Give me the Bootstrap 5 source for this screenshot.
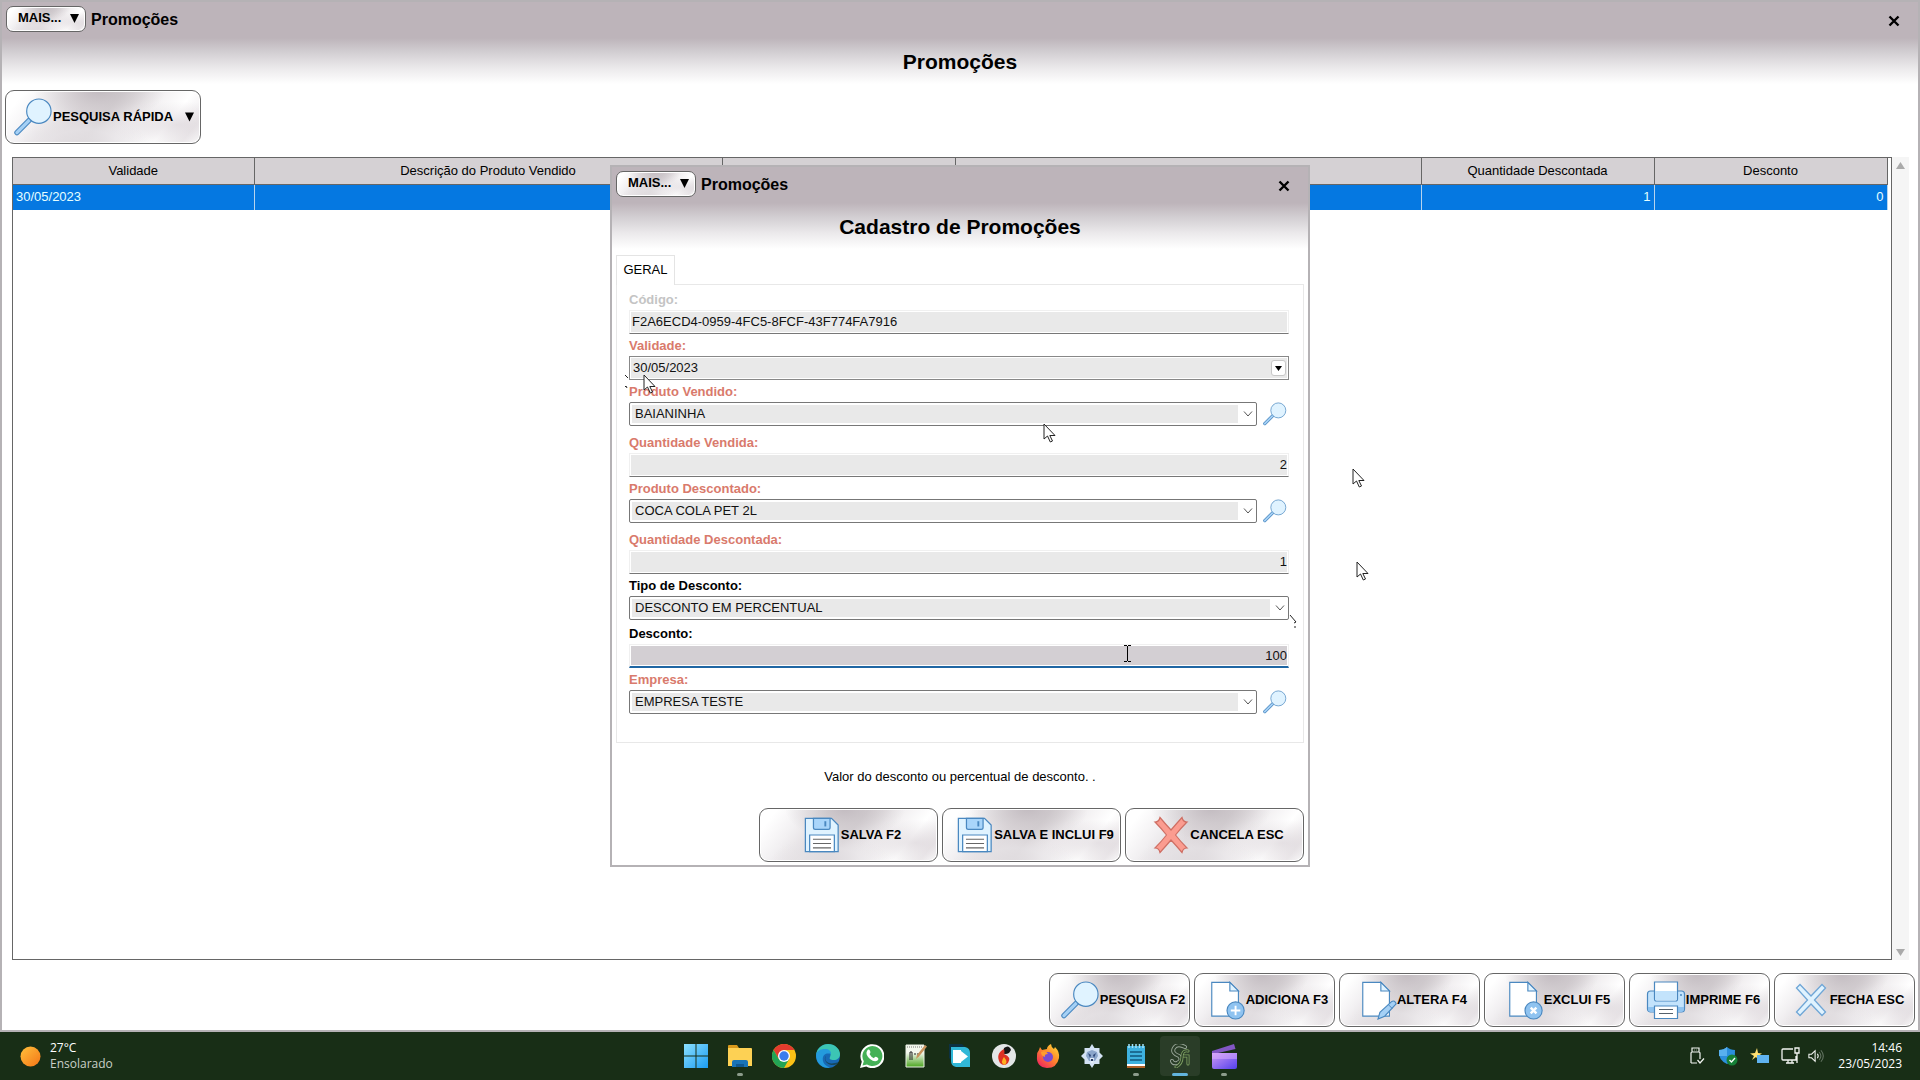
<!DOCTYPE html>
<html lang="pt-BR">
<head>
<meta charset="utf-8">
<meta name="viewport" content="width=device-width, initial-scale=1">
<title>Promoções</title>
<link href="https://cdn.jsdelivr.net/npm/bootstrap@5.3.0/dist/css/bootstrap.min.css" rel="stylesheet">
<style>
  body { font-family: "Liberation Sans", Arial, sans-serif; font-size: 13px; line-height: 16px; color: #000; background: #fff; }
  .frame-win { border: 2px solid #b5b2b5; background: linear-gradient(#bdb4ba 0, #bdb4ba 36px, #d2ced2 50px, #ebe9eb 66px, #fff 82px) #fff; }
  .desk { min-height: 0; }
  .title-bar { height: 36px; padding: 4px 4px 0; gap: 5px; }
  .title-name { font-size: 16px; font-weight: 700; line-height: 28px; }
  .win-heading { font-size: 21px; font-weight: 700; line-height: 48px; text-align: center; margin: 0; }
  .shut { border: 0; background: none; padding: 0; width: 26px; height: 28px; margin-right: 7px; }
  .metal { font-size: 13px; font-weight: 700; color: #000; border: 1px solid #666; border-radius: 9px; padding: 0; white-space: nowrap;
    box-shadow: inset 0 0 0 1px #fff;
    background:
      radial-gradient(ellipse 34% 60% at 48% 0%, #c3bcc1 0%, rgba(200,194,198,.6) 45%, rgba(255,255,255,0) 100%),
      radial-gradient(ellipse 34% 50% at 40% 100%, #e0dcdf 0%, rgba(232,229,232,.6) 50%, rgba(255,255,255,0) 100%),
      radial-gradient(ellipse 35% 45% at 88% 65%, rgba(215,208,213,.6) 0%, rgba(255,255,255,0) 100%),
      linear-gradient(128deg, #fff 8%, #f2f0f2 22%, #dfdadd 38%, #d8d3d6 50%, #eeebed 62%, #fff 80%, #efecee 92%, #fff 100%); }
  .metal:hover { color: #000; }
  .metal svg { flex: none; }
  .more { width: 80px; height: 26px; border-radius: 7px; padding: 0 6px 2px 11px; }
  .quick { width: 196px; height: 54px; padding: 0 6px 0 8px; }
  .act { width: 141px; height: 54px; padding-left: 7px; }
  .act-wide { width: 179px; }
  .quick-row { padding: 4px 3px 13px; }
  .sheet-row { padding: 0 11px 0 10px; }
  .sheet { border: 1px solid #666; padding-right: 3px; }
  .sheet-table { width: 100%; table-layout: fixed; border-collapse: collapse; }
  .sheet-table th, .sheet-table td { padding: 0 3px; height: 26px; border-right: 1px solid #666; }
  .sheet-table th { background: #d5d1d4; font-weight: 400; text-align: center; border-bottom: 1px solid #666; }
  .sheet-table td { background: #0578e1; color: #e6ffff; border-right-color: #b7d4ee; }
  .c-date { width: 241px; } .c-desc { width: 468px; } .c-qty { width: 233px; } .c-prod { width: 466px; }
  .rail { width: 17px; flex: none; background: #f5f5f5; padding: 5px 0 4px; }
  .acts { padding: 13px 3px 3px; gap: 4px; }

  .dlg { position: absolute; left: 50%; top: 50%; transform: translate(-50%, -50%); width: 700px; z-index: 5; }
  .dlg-body { padding: 4px 4px 0; }
  .tab-on { border: 1px solid #e4e4e4; border-bottom: 0; background: #fff; width: 59px; height: 30px; margin-bottom: -1px; position: relative; padding: 0 0 2px; color: #000; }
  .panel-box { border: 1px solid #e8e8e8; padding: 3px 14px 28px 12px; }
  .f-label { display: block; height: 22px; line-height: 24px; font-weight: 700; color: #d97a6c; }
  .f-off { color: #c4c4c4; } .f-opt { color: #000; }
  .f-line, .f-combo { display: block; width: 100%; height: 24px; font-size: 13px; line-height: 16px; color: #111; border-radius: 0; }
  .f-line { border: 1px solid #f0f0f0; border-bottom-color: #777; padding: 1px 2px 3px; background: #e9e9e9; box-shadow: inset 1px 1px 0 #fff, inset -1px -1px 0 #fff; }
  .f-line.text-end { padding-right: 1px; }
  .f-live { background: #d3cfd3; border-bottom: 2px solid #1f66a3; padding-bottom: 2px; }
  .f-date { border: 1px solid #888; padding-left: 3px; }
  .f-combo { appearance: none; border: 1px solid #777; border-radius: 2px; padding: 0 20px 1px 5px; background: linear-gradient(#e9e9e9, #e9e9e9) 2px 2px / calc(100% - 20px) calc(100% - 4px) no-repeat #fff; }
  .f-line:focus, .f-combo:focus { outline: 0; }
  .pick { position: relative; flex: 1; }
  .pick .chev { position: absolute; right: 4px; top: 9px; pointer-events: none; }
  .pick .day { position: absolute; right: 3px; top: 4px; width: 15px; height: 16px; border: 1px solid #c8c8c8; border-radius: 3px; background: #fff; padding: 0; line-height: 0; }
  .lens { border: 0; background: none; padding: 0; width: 26px; height: 24px; line-height: 0; text-align: left; }
  .f-find { gap: 6px; margin-bottom: 5px; }
  .f-gap { margin-bottom: 2px; }
  .hint { line-height: 62px; padding-top: 3px; text-align: center; margin: 0; }
  .dlg-acts { gap: 4px; padding-bottom: 3px; }

  .pointer { position: absolute; z-index: 9; pointer-events: none; }
  .p1 { left: 643px; top: 374px; } .p2 { left: 1043px; top: 423px; } .p3 { left: 1352px; top: 468px; } .p4 { left: 1356px; top: 561px; }
  .p5 { left: 1123px; top: 645px; } .p6 { left: 624px; top: 374px; } .p7 { left: 1289px; top: 614px; }

  .task-bar { display: grid; grid-template-columns: 1fr auto 1fr; height: 48px; background: #182e16; color: #fff; font-family: "Open Sans", "Noto Sans", sans-serif; font-size: 12px; flex: none; }
  .task-btn { width: 44px; height: 48px; border: 0; background: none; padding: 0; position: relative; }
  .task-btn::after { content: ""; position: absolute; bottom: 4px; left: 19px; width: 6px; height: 3px; border-radius: 2px; background: transparent; }
  .task-open::after { background: #8c9c8b; }
  .task-now::before { content: ""; position: absolute; inset: 4px 2px; border-radius: 4px; background: #2a3d28; }
  .task-now::after { left: 14px; width: 16px; background: #62b5dd; }
  .task-btn svg { position: relative; }
  .weather { padding-left: 20px; gap: 9px; }
  .soft { color: #c9d0c8; }
  .tray { padding-right: 18px; }
  .tray-icons { gap: 8px; margin-right: 14px; }
</style>
<script src="https://cdn.jsdelivr.net/npm/bootstrap@5.3.0/dist/js/bootstrap.bundle.min.js"></script>
</head>
<body class="vh-100 overflow-hidden d-flex flex-column">

<svg width="0" height="0" class="position-absolute" aria-hidden="true">
  <symbol id="lens" viewBox="0 0 40 40"><path d="M15.500 23.500 3 36" stroke="#4a88c0" stroke-width="5.500" stroke-linecap="round"/><path d="M15.500 23.500 3 36" stroke="#a5d0f5" stroke-width="3.300" stroke-linecap="round"/><circle cx="25.500" cy="14" r="12.500" fill="#e0f3ff" stroke="#4a88c0" stroke-width="1.200"/></symbol>
  <symbol id="tri" viewBox="0 0 10 10"><path d="M0 0h10L5 10z"/></symbol>
  <symbol id="cross" viewBox="0 0 12 12"><path d="m1.500 1.500 9 9m0-9-9 9" stroke="#000" stroke-width="2.400"/></symbol>
  <symbol id="down" viewBox="0 0 10 6"><path d="m1 .5 4 4.500 4-4.500" fill="none" stroke="#555"/></symbol>
  <symbol id="disk" viewBox="0 0 40 40"><path d="M2.500 2.500H30l7 7V37.500H2.500z" fill="#e0f3ff" stroke="#4a88c0" stroke-width="1.300"/><path d="M11 2.500h17.500V12q0 2-2 2H13q-2 0-2-2z" fill="#a9d5fa" stroke="#4a88c0" stroke-width="1.300"/><path d="M23.500 5.500v5.500" stroke="#4a88c0" stroke-width="2"/><path d="M7 37.500V20h26v17.500z" fill="#fff" stroke="#4a88c0" stroke-width="1.300"/><path d="M10.500 24.500h19m-19 4.500h19m-19 4.500h19" stroke="#666" stroke-width="1.200"/></symbol>
  <symbol id="sheet" viewBox="0 0 40 40"><path d="M3 2.500h19l9 9V38H3z" fill="#fff" stroke="#4a88c0" stroke-width="1.200"/><path d="M22 2.500v9h9z" fill="#e0f3ff" stroke="#4a88c0" stroke-width="1.200"/></symbol>
  <symbol id="arrow" viewBox="0 0 13 20"><path d="M1 1v15l3.500-3 2.800 6 2.200-1-2.700-5.500H12z" fill="#fff" stroke="#222" stroke-width="1"/></symbol>
</svg>

<main class="desk flex-grow-1 position-relative">
  <section class="frame-win h-100 d-flex flex-column">
    <header class="title-bar d-flex align-items-start">
      <button class="btn metal more d-flex align-items-center justify-content-between" type="button">MAIS...<svg width="9" height="9"><use href="#tri"/></svg></button>
      <span class="title-name">Promoções</span>
      <button class="shut ms-auto" type="button" aria-label="Fechar"><svg width="12" height="12"><use href="#cross"/></svg></button>
    </header>
    <h1 class="win-heading">Promoções</h1>
    <div class="quick-row">
      <button class="btn metal quick d-flex align-items-center" type="button"><svg width="39" height="40"><use href="#lens"/></svg>PESQUISA RÁPIDA<svg class="ms-auto" width="9" height="10"><use href="#tri"/></svg></button>
    </div>
    <div class="sheet-row d-flex flex-grow-1">
      <div class="sheet flex-grow-1">
        <table class="sheet-table">
          <colgroup><col class="c-date"><col class="c-desc"><col class="c-qty"><col class="c-prod"><col class="c-qty"><col class="c-qty"></colgroup>
          <thead><tr><th>Validade</th><th>Descrição do Produto Vendido</th><th></th><th></th><th>Quantidade Descontada</th><th>Desconto</th></tr></thead>
          <tbody><tr><td>30/05/2023</td><td></td><td></td><td></td><td class="text-end">1</td><td class="text-end">0</td></tr></tbody>
        </table>
      </div>
      <div class="rail d-flex flex-column justify-content-between align-items-center" aria-hidden="true">
        <svg width="9" height="7" viewBox="0 0 9 7"><path d="M4.500 0 9 7H0z" fill="#aaa"/></svg>
        <svg width="9" height="7" viewBox="0 0 9 7"><path d="M0 0h9L4.500 7z" fill="#aaa"/></svg>
      </div>
    </div>
    <footer class="acts d-flex justify-content-end">
      <button class="btn metal act d-flex align-items-center justify-content-center" type="button"><svg width="39" height="40"><use href="#lens"/></svg>PESQUISA F2</button>
      <button class="btn metal act d-flex align-items-center justify-content-center" type="button"><svg width="38" height="40" viewBox="0 0 38 42"><use href="#sheet" width="40" height="40"/><circle cx="28" cy="32" r="9" fill="#8fc3f0" stroke="#4a88c0" stroke-width="1.200"/><path d="M28 27v10m-5-5h10" stroke="#fff" stroke-width="2"/></svg>ADICIONA F3</button>
      <button class="btn metal act d-flex align-items-center justify-content-center" type="button"><svg width="38" height="40" viewBox="0 0 38 42"><use href="#sheet" width="40" height="40"/><path d="m19 41 2-7L33.500 22.500q3-1.500 4.500 2.500L26 38z" fill="#a5d0f5" stroke="#4a88c0" stroke-width="1.200"/><path d="m30 26 4 4" stroke="#4a88c0"/></svg>ALTERA F4</button>
      <button class="btn metal act d-flex align-items-center justify-content-center" type="button"><svg width="38" height="40" viewBox="0 0 38 42"><use href="#sheet" width="40" height="40"/><circle cx="28" cy="32" r="9" fill="#8fc3f0" stroke="#4a88c0" stroke-width="1.200"/><path d="m25 29 6 6m0-6-6 6" stroke="#fff" stroke-width="2.500"/></svg>EXCLUI F5</button>
      <button class="btn metal act d-flex align-items-center justify-content-center" type="button"><svg width="40" height="40" viewBox="0 0 40 40"><rect x="1.500" y="11" width="37" height="21" rx="3" fill="#c3e3fc" stroke="#4a88c0" stroke-width="1.200"/><path d="M8.500 2h23v17q0 2-2 2h-19q-2 0-2-2z" fill="#fff" stroke="#4a88c0" stroke-width="1.200"/><path d="M9 11h22v8q0 1.500-1.500 1.500h-19Q9 20.500 9 19z" fill="#c3e3fc"/><path d="M2 27h36v2q0 3-3 3H5q-3 0-3-3z" fill="#8fc3f0"/><path d="M8.500 26h23v12.500h-23z" fill="#fff" stroke="#4a88c0" stroke-width="1.200"/><path d="M13 29.500h14m-14 4h14" stroke="#55606b"/><path d="M34 15h2" stroke="#4a88c0" stroke-width="1.500"/></svg>IMPRIME F6</button>
      <button class="btn metal act d-flex align-items-center justify-content-center" type="button"><svg width="38" height="40" viewBox="0 0 38 40"><path d="m4.500 8 3.500-3.500 11 11.500 11-11.500L33.500 8 22.500 20l11 12-3.500 3.500-11-11.500L8 35.500 4.500 32l11-12z" fill="#e0f3ff" stroke="#6fa6d6" stroke-width="1.300"/></svg>FECHA ESC</button>
    </footer>
  </section>

  <section class="dlg frame-win" role="dialog" aria-labelledby="dlg-title">
    <header class="title-bar d-flex align-items-start">
      <button class="btn metal more d-flex align-items-center justify-content-between" type="button">MAIS...<svg width="9" height="9"><use href="#tri"/></svg></button>
      <span class="title-name">Promoções</span>
      <button class="shut ms-auto" type="button" aria-label="Fechar"><svg width="12" height="12"><use href="#cross"/></svg></button>
    </header>
    <h2 class="win-heading" id="dlg-title">Cadastro de Promoções</h2>
    <form class="dlg-body">
      <button class="tab-on d-block" type="button" role="tab" aria-selected="true">GERAL</button>
      <div class="panel-box">
        <label class="f-label f-off" for="cod">Código:</label>
        <input class="f-line" id="cod" type="text" value="F2A6ECD4-0959-4FC5-8FCF-43F774FA7916" readonly>
        <label class="f-label" for="val">Validade:</label>
        <div class="pick"><input class="f-line f-date" id="val" type="text" value="30/05/2023"><button class="day" type="button" aria-label="Abrir calendário"><svg width="7" height="5" viewBox="0 0 10 10" preserveAspectRatio="none"><path d="M0 0h10L5 10z"/></svg></button></div>
        <label class="f-label" for="pv">Produto Vendido:</label>
        <div class="f-find d-flex"><div class="pick"><select class="f-combo" id="pv"><option>BAIANINHA</option></select><svg class="chev" width="10" height="6"><use href="#down"/></svg></div><button class="lens" type="button" aria-label="Pesquisar produto"><svg width="24" height="24"><use href="#lens"/></svg></button></div>
        <label class="f-label" for="qv">Quantidade Vendida:</label>
        <input class="f-line text-end" id="qv" type="text" value="2">
        <label class="f-label" for="pd">Produto Descontado:</label>
        <div class="f-find d-flex"><div class="pick"><select class="f-combo" id="pd"><option>COCA COLA PET 2L</option></select><svg class="chev" width="10" height="6"><use href="#down"/></svg></div><button class="lens" type="button" aria-label="Pesquisar produto descontado"><svg width="24" height="24"><use href="#lens"/></svg></button></div>
        <label class="f-label" for="qd">Quantidade Descontada:</label>
        <input class="f-line text-end" id="qd" type="text" value="1">
        <label class="f-label f-opt" for="td">Tipo de Desconto:</label>
        <div class="pick f-gap"><select class="f-combo" id="td"><option>DESCONTO EM PERCENTUAL</option></select><svg class="chev" width="10" height="6"><use href="#down"/></svg></div>
        <label class="f-label f-opt" for="de">Desconto:</label>
        <input class="f-line f-live text-end" id="de" type="text" value="100">
        <label class="f-label" for="em">Empresa:</label>
        <div class="d-flex f-find mb-0"><div class="pick"><select class="f-combo" id="em"><option>EMPRESA TESTE</option></select><svg class="chev" width="10" height="6"><use href="#down"/></svg></div><button class="lens" type="button" aria-label="Pesquisar empresa"><svg width="24" height="24"><use href="#lens"/></svg></button></div>
      </div>
      <p class="hint">Valor do desconto ou percentual de desconto. .</p>
      <div class="dlg-acts d-flex justify-content-end">
        <button class="btn metal act act-wide d-flex align-items-center justify-content-center" type="button"><svg width="38" height="40"><use href="#disk"/></svg>SALVA F2</button>
        <button class="btn metal act act-wide d-flex align-items-center justify-content-center" type="button"><svg width="38" height="40"><use href="#disk"/></svg>SALVA E INCLUI F9</button>
        <button class="btn metal act act-wide d-flex align-items-center justify-content-center" type="button"><svg width="38" height="40" viewBox="0 0 38 40"><path d="M3 7q4 0 5-4.500 5 6 11 12.500Q25 8 30 2.500q1 4.500 5 4.500-6 6-11.500 13Q29 27 35 33q-4 0-5 4.500-5-6-11-12.500-6 7-11 12.500Q7 33 3 33q6-6 11.500-13Q9 13 3 7z" fill="#fb9c90" stroke="#cf6f64" stroke-width="1.200"/></svg>CANCELA ESC</button>
      </div>
    </form>
  </section>

  <svg class="pointer p1" width="13" height="20"><use href="#arrow"/></svg>
  <svg class="pointer p2" width="13" height="20"><use href="#arrow"/></svg>
  <svg class="pointer p3" width="13" height="20"><use href="#arrow"/></svg>
  <svg class="pointer p4" width="13" height="20"><use href="#arrow"/></svg>
  <svg class="pointer p5" width="9" height="17" viewBox="0 0 9 17"><path d="M1 .5h3m1 0h3M4.500 1v15M1 16.500h3m1 0h3" stroke="#000"/></svg>
  <svg class="pointer p6" width="6" height="16" viewBox="0 0 6 16"><path d="m1 1 3 3M1 13l1-1 1 2" fill="none" stroke="#222"/></svg>
  <svg class="pointer p7" width="10" height="16" viewBox="0 0 10 16"><path d="m1 1 6 7-2 1M6 12v2" fill="none" stroke="#222"/></svg>
</main>

<nav class="task-bar" aria-label="Barra de tarefas">
  <div class="weather d-flex align-items-center">
    <svg width="21" height="21" viewBox="0 0 21 21"><defs><linearGradient id="sun" x1="0" y1="0" x2="1" y2="1"><stop stop-color="#ffc13c"/><stop offset="1" stop-color="#f47516"/></linearGradient></defs><circle cx="10.500" cy="10.500" r="10" fill="url(#sun)"/></svg>
    <div><div>27°C</div><div class="soft">Ensolarado</div></div>
  </div>
  <div class="d-flex">
    <button class="task-btn" type="button" aria-label="Iniciar"><svg width="24" height="24" viewBox="0 0 24 24"><defs><linearGradient id="win" x1="0" y1="0" x2="1" y2="1"><stop stop-color="#8be0ff"/><stop offset="1" stop-color="#1b9cf0"/></linearGradient></defs><path d="M0 0h11.500v11.500H0zM12.500 0H24v11.500H12.500zM0 12.500h11.500V24H0zM12.500 12.500H24V24H12.500z" fill="url(#win)"/></svg></button>
    <button class="task-btn task-open" type="button" aria-label="Explorador"><svg width="24" height="24" viewBox="0 0 24 24"><path d="M0 2q0-1 1-1h8l2 3H0z" fill="#d99a1c"/><path d="M0 4h23q1 0 1 1v17H0z" fill="#fdd154"/><path d="M4 23v-5q0-2 2-2h12q2 0 2 2v5z" fill="#1873b8"/><path d="M8 20h8v3H8z" fill="#0f5792"/></svg></button>
    <button class="task-btn" type="button" aria-label="Chrome"><svg width="24" height="24" viewBox="0 0 24 24"><circle cx="12" cy="12" r="12" fill="#fbc116"/><path d="M1.600 6A12 12 0 0 1 22.400 6H12l-5.200 9z" fill="#e33b2e"/><path d="M1.600 6A12 12 0 0 0 12 24l5.200-9H6.800z" fill="#23a455"/><circle cx="12" cy="12" r="6" fill="#fff"/><circle cx="12" cy="12" r="4.700" fill="#3b7ded"/></svg></button>
    <button class="task-btn" type="button" aria-label="Edge"><svg width="24" height="24" viewBox="0 0 24 24"><circle cx="12" cy="12" r="12" fill="#1769b5"/><path d="M0 11C1 4 6 0 12 0c7 0 12 5 12 10 0 4-3 6-6 6-4 0-5-1-4-3 2-4-1-7-5-7-5 0-8 2-9 5z" fill="#3cc6b4"/><path d="M0 11c1-4 4-6 9-6 4 0 6 2 6 5-7-2-9 3-8 7 1 4 5 6 7 6.500C6 25 0 19 0 11z" fill="#249bdd"/><path d="M10 12c-3 5 3 10 12 6l-1 2c-3 2-8 1-10-1s-3-5-1-7z" fill="#182e16" opacity=".55"/></svg></button>
    <button class="task-btn" type="button" aria-label="WhatsApp"><svg width="24" height="24" viewBox="0 0 24 24"><path d="M0 24l1.800-6.200A12 12 0 1 1 6.300 22.500z" fill="#fff"/><path d="m2.500 21.500 1.300-4.300A10 10 0 1 1 7 20.500z" fill="#45b157"/><path d="M7 7q2-3 3.300.5.500 1.500-.8 2.500 1.500 3 4.500 4.200 1-1.800 2.500-1.200 3.300 1.500 1 3.500-3 2-7.500-1.500Q5 10.500 7 7z" fill="#fff"/></svg></button>
    <button class="task-btn" type="button" aria-label="Editor"><svg width="24" height="24" viewBox="0 0 24 24"><defs><linearGradient id="npp" x1="0" y1="0" x2="0" y2="1"><stop offset=".35" stop-color="#f4f8ee"/><stop offset="1" stop-color="#4ba51f"/></linearGradient></defs><path d="M2 1h18v22H2z" fill="url(#npp)" stroke="#e9efe4"/><path d="M3 3h15" stroke="#777" stroke-dasharray="1 1"/><path d="M6 16V8h2v8M10 10h2m1 0h2" stroke="#222" fill="none"/><path d="m12 15 1-4 8-10 2 1.500-8 10z" fill="#c8935d"/></svg></button>
    <button class="task-btn" type="button" aria-label="Acesso remoto"><svg width="24" height="24" viewBox="0 0 24 24"><path d="M1 0h13l4 4v14H5l-4-4z" fill="#0c3142"/><path d="M3 3h14q5 1 5 6v14H8q-5-1-5-6z" fill="#31b8d7"/><path d="M5 6h8v4h-3v5h3v4H5z" fill="#fff"/><path d="M7 10h6V7l7 5.500-7 5.500v-3H7z" fill="#fff"/></svg></button>
    <button class="task-btn" type="button" aria-label="Firebird"><svg width="24" height="24" viewBox="0 0 24 24"><circle cx="12" cy="12" r="12" fill="#e3e6e7"/><path d="M12 4q5-4 7 2l-2 3q-4 2-6 0z" fill="#151515"/><path d="M12 5Q3 10 8 19q4 4 8 0 4-6-4-9 1-2 0-5z" fill="#dd3124"/><path d="M12 13q-4 5 0 8 5-2 0-8z" fill="#ffb020"/></svg></button>
    <button class="task-btn" type="button" aria-label="Firefox"><svg width="24" height="24" viewBox="0 0 24 24"><defs><linearGradient id="fox" x1="1" y1="0" x2=".2" y2="1"><stop stop-color="#ffe13b"/><stop offset=".5" stop-color="#ff8a2a"/><stop offset="1" stop-color="#f0245f"/></linearGradient></defs><path d="M4 3l2 3 5-1q0-3 4-5 0 3 3 5l1-2q5 5 4 11-2 10-12 10Q0 23 1 12q0-4 2-6z" fill="url(#fox)"/><circle cx="12" cy="13" r="5" fill="#7a4bd0"/><path d="M5 8q5-2 7 2-4 0-3 3-4-1-4-5z" fill="#ff9d2e"/></svg></button>
    <button class="task-btn" type="button" aria-label="Configurações"><svg width="24" height="24" viewBox="0 0 24 24"><path d="m12 0 2.500 4h5v4.500L23 12l-3.500 3.500V20h-5L12 24l-2.500-4h-5v-4.500L1 12l3.500-3.500V4h5z" fill="#d3e2f4"/><path d="m7 8 5-2 5 2 1 4-3 5H9l-3-5z" fill="#8ba6cb"/><path d="m8 9 3 2-1 3zm8 0-3 2 1 3z" fill="#2f4878"/><path d="M10 14h4l-1 5h-2z" fill="#e6effa"/><path d="M11 15h2v2h-2z" fill="#283b63"/></svg></button>
    <button class="task-btn task-open" type="button" aria-label="Bloco de notas"><svg width="24" height="24" viewBox="0 0 24 24"><path d="M3 2h18v19H3z" fill="#3eb2df"/><path d="M3 20h18v2H3z" fill="#fff"/><path d="M3 22h18v2H3z" fill="#b06127"/><path d="M5 0v4m3.500-4v4M12 0v4m3.500-4v4M19 0v4" stroke="#a2e3f9" stroke-width="1.500"/><path d="M6 8h12M6 12h12M6 16h12" stroke="#12577d" stroke-width="1.600"/></svg></button>
    <button class="task-btn task-now" type="button" aria-label="Sistema"><svg width="24" height="24" viewBox="0 0 24 24"><g fill="none" stroke-linecap="round"><path d="M17 3Q9-1 6 4t5 8q4 4-2 7-4 1-5-2" stroke="#9aa79a" stroke-width="4"/><path d="M17 3Q9-1 6 4t5 8q4 4-2 7-4 1-5-2" stroke="#2a3d28" stroke-width="2.200"/><path d="M20 7q-6-1-6 6 0 7-6 10M16 12h4v8" stroke="#83a565" stroke-width="3"/><path d="M20 7q-6-1-6 6 0 7-6 10M16 12h4v8" stroke="#2a3d28" stroke-width="1.400"/></g></svg></button>
    <button class="task-btn task-open" type="button" aria-label="Editor de vídeo"><svg width="25" height="25" viewBox="0 0 25 25"><defs><linearGradient id="clip" x1="0" y1="0" x2="1" y2="1"><stop stop-color="#cf9af5"/><stop offset="1" stop-color="#5340ec"/></linearGradient></defs><path d="m0 7 22-7 1.500 5L6 9H0z" fill="#8257c4"/><path d="M0 9h25v14q0 2-2 2H2q-2 0-2-2z" fill="url(#clip)"/><path d="M0 9h25v6H0z" fill="#e3b3ff" opacity=".45"/></svg></button>
  </div>
  <div class="tray d-flex align-items-center justify-content-end">
    <div class="tray-icons d-flex align-items-center">
      <svg width="24" height="20" viewBox="0 0 24 20" fill="none" stroke="#f2f5f2" stroke-width="1.200"><path d="M8 6V2h7v4M7 17V7q0-1 1-1h7q1 0 1 1v6M7 17h6M10 4h.5M12.500 4h.5M13.500 14l2.500 3 4-4.500"/></svg>
      <svg width="24" height="20" viewBox="0 0 24 20"><path d="M3 4q5 0 8-3 3 3 8 3 1 10-8 14Q2 14 3 4z" fill="#2b8fdc"/><path d="M3 4q5 0 8-3v9H3z" fill="#58b0ee"/><circle cx="16" cy="14" r="5.500" fill="#168037"/><path d="m13.500 14 2 2 3.500-4" stroke="#fff" stroke-width="1.300" fill="none"/></svg>
      <svg width="24" height="20" viewBox="0 0 24 20"><path d="m9 2 1 5 4 .5-4 2.500.5 4L8 11l-4 3 2-4-4-2.500L7 7z" fill="#ffe071"/><path d="M9 9h12v8H9z" fill="#5fb3f0"/></svg>
      <svg width="20" height="20" viewBox="0 0 20 20" fill="none" stroke="#f2f5f2" stroke-width="1.300"><path d="M13 3H3q-1 0-1 1v9q0 1 1 1h13v-4M6 17h8M8 14v3m4-3v3M15 2h4v5h-4zM17 7v10"/></svg>
      <svg width="16" height="20" viewBox="0 0 18 20" fill="none" stroke="#f2f5f2" stroke-width="1.200"><path d="M1 8h3l4-4v12l-4-4H1zM10.500 7.500q2 2.500 0 5"/><path d="M12.500 5.500q4 4.500 0 9M14.500 3.500q5.500 6.500 0 13" opacity=".35"/></svg>
    </div>
    <div class="text-end"><div>14:46</div><div>23/05/2023</div></div>
  </div>
</nav>
</body>
</html>
